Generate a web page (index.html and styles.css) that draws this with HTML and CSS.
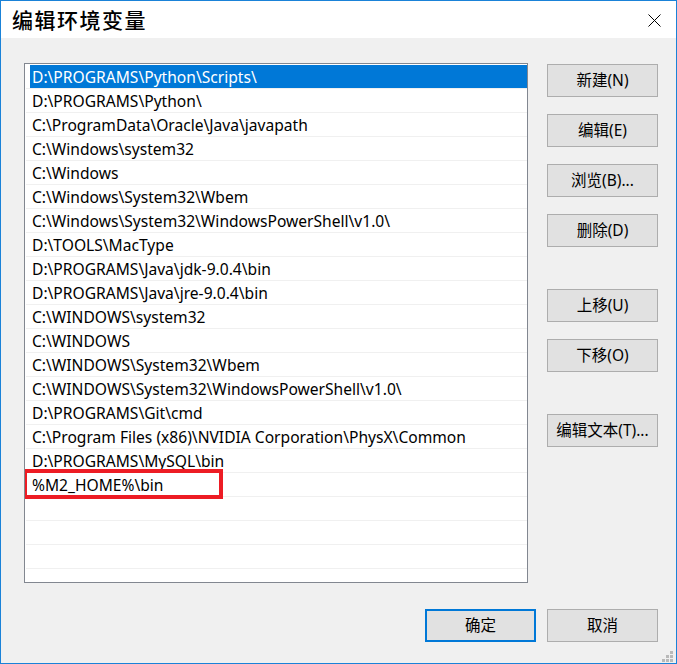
FILE: index.html
```html
<!DOCTYPE html>
<html lang="zh-CN">
<head>
<meta charset="utf-8">
<title>编辑环境变量</title>
<link rel="stylesheet" href="styles.css">
</head>
<body>
<div class="window">
  <div class="titlebar">
    <span class="title">编辑环境变量</span>
    <span class="close" aria-label="关闭">
      <svg width="13" height="13" viewBox="0 0 13 13"><path d="M0.5 0.5 L12.5 12.5 M12.5 0.5 L0.5 12.5" stroke="#000" stroke-width="1" fill="none"/></svg>
    </span>
  </div>
  <div class="content">
    <div class="main">
      <div class="listbox">
        <div class="row selected"><span class="cell">D:\PROGRAMS\Python\Scripts\</span></div>
        <div class="row"><span class="cell">D:\PROGRAMS\Python\</span></div>
        <div class="row"><span class="cell">C:\ProgramData\Oracle\Java\javapath</span></div>
        <div class="row"><span class="cell">C:\Windows\system32</span></div>
        <div class="row"><span class="cell">C:\Windows</span></div>
        <div class="row"><span class="cell">C:\Windows\System32\Wbem</span></div>
        <div class="row"><span class="cell">C:\Windows\System32\WindowsPowerShell\v1.0\</span></div>
        <div class="row"><span class="cell">D:\TOOLS\MacType</span></div>
        <div class="row"><span class="cell">D:\PROGRAMS\Java\jdk-9.0.4\bin</span></div>
        <div class="row"><span class="cell">D:\PROGRAMS\Java\jre-9.0.4\bin</span></div>
        <div class="row"><span class="cell">C:\WINDOWS\system32</span></div>
        <div class="row"><span class="cell">C:\WINDOWS</span></div>
        <div class="row"><span class="cell">C:\WINDOWS\System32\Wbem</span></div>
        <div class="row"><span class="cell">C:\WINDOWS\System32\WindowsPowerShell\v1.0\</span></div>
        <div class="row"><span class="cell">D:\PROGRAMS\Git\cmd</span></div>
        <div class="row"><span class="cell">C:\Program Files (x86)\NVIDIA Corporation\PhysX\Common</span></div>
        <div class="row"><span class="cell">D:\PROGRAMS\MySQL\bin</span></div>
        <div class="row highlighted"><span class="cell">%M2_HOME%\bin</span><span class="redbox"></span></div>
        <div class="row"><span class="cell"></span></div>
        <div class="row"><span class="cell"></span></div>
        <div class="row"><span class="cell"></span></div>
        <div class="row"><span class="cell"></span></div>
      </div>
      <div class="buttons">
        <div class="group">
          <button class="btn">新建(N)</button>
          <button class="btn">编辑(E)</button>
          <button class="btn">浏览(B)...</button>
          <button class="btn">删除(D)</button>
        </div>
        <div class="group">
          <button class="btn">上移(U)</button>
          <button class="btn">下移(O)</button>
        </div>
        <div class="group">
          <button class="btn">编辑文本(T)...</button>
        </div>
      </div>
    </div>
    <div class="footer">
      <button class="btn default">确定</button>
      <button class="btn">取消</button>
    </div>
    <div class="grip">
      <i></i><i></i><i></i><i></i><i></i><i></i>
    </div>
  </div>
</div>
</body>
</html>
```
FILE: styles.css
```css
html, body {
  margin: 0;
  padding: 0;
  background: #f0f0f0;
}

.window {
  width: 677px;
  height: 664px;
  box-sizing: border-box;
  border: 1px solid #1a82d8;
  display: flex;
  flex-direction: column;
  font-family: "Noto Sans", "Noto Sans CJK SC", sans-serif;
  font-size: 15px;
  color: #000;
}

.titlebar {
  height: 37px;
  flex: none;
  background: #fff;
  display: flex;
  align-items: center;
  justify-content: space-between;
  padding: 0 15px 0 11px;
}

.title {
  font-family: "Noto Sans CJK SC", sans-serif;
  font-size: 21px;
  font-weight: 500;
  letter-spacing: 1.5px;
  line-height: 1;
  margin-top: -1px;
}

.close {
  display: flex;
  width: 13px;
  height: 13px;
  margin-top: 1px;
}

.content {
  flex: 1;
  position: relative;
  background: #f0f0f0;
  padding: 25px 18px 0 23px;
  display: flex;
  flex-direction: column;
}

.main {
  display: flex;
  gap: 19px;
}

.listbox {
  width: 504px;
  height: 520px;
  box-sizing: border-box;
  border: 1px solid #828790;
  background: #fff;
  padding: 1px 0 0 1px;
  overflow: hidden;
  position: relative;
  font-size: 15.6px;
}

.row {
  height: 23px;
  border-bottom: 1px solid #f0f0f0;
  display: flex;
  position: relative;
}

.cell {
  flex: 1;
  margin-left: 4px;
  padding: 1px 0 0 2px;
  line-height: 22px;
  white-space: nowrap;
}

.row.selected .cell {
  background: #0078d7;
  color: #fff;
}

.redbox {
  position: absolute;
  left: -3px;
  top: -4px;
  width: 200px;
  height: 30px;
  box-sizing: border-box;
  border: 4px solid #ed1c24;
}

.buttons {
  display: flex;
  flex-direction: column;
  gap: 42px;
  padding-top: 1px;
}

.group {
  display: flex;
  flex-direction: column;
  gap: 17px;
}

.btn {
  width: 111px;
  height: 33px;
  box-sizing: border-box;
  border: 1px solid #adadad;
  background: #e1e1e1;
  font-family: "Noto Sans", "Noto Sans CJK SC", sans-serif;
  font-size: 15.5px;
  color: #000;
  padding: 0;
  margin: 0;
  line-height: 1;
}

.btn.default {
  border: 2px solid #0078d7;
}

.footer {
  display: flex;
  justify-content: flex-end;
  gap: 11px;
  margin-top: 26px;
}

.grip {
  position: absolute;
  right: 3px;
  bottom: 1px;
  width: 11px;
  height: 11px;
  display: grid;
  grid-template-columns: repeat(3, 3px);
  grid-template-rows: repeat(3, 3px);
  gap: 1px;
}

.grip i {
  background: #b9b9b9;
}

.grip i:nth-child(1) { grid-column: 3; grid-row: 1; }
.grip i:nth-child(2) { grid-column: 2; grid-row: 2; }
.grip i:nth-child(3) { grid-column: 3; grid-row: 2; }
.grip i:nth-child(4) { grid-column: 1; grid-row: 3; }
.grip i:nth-child(5) { grid-column: 2; grid-row: 3; }
.grip i:nth-child(6) { grid-column: 3; grid-row: 3; }
```
